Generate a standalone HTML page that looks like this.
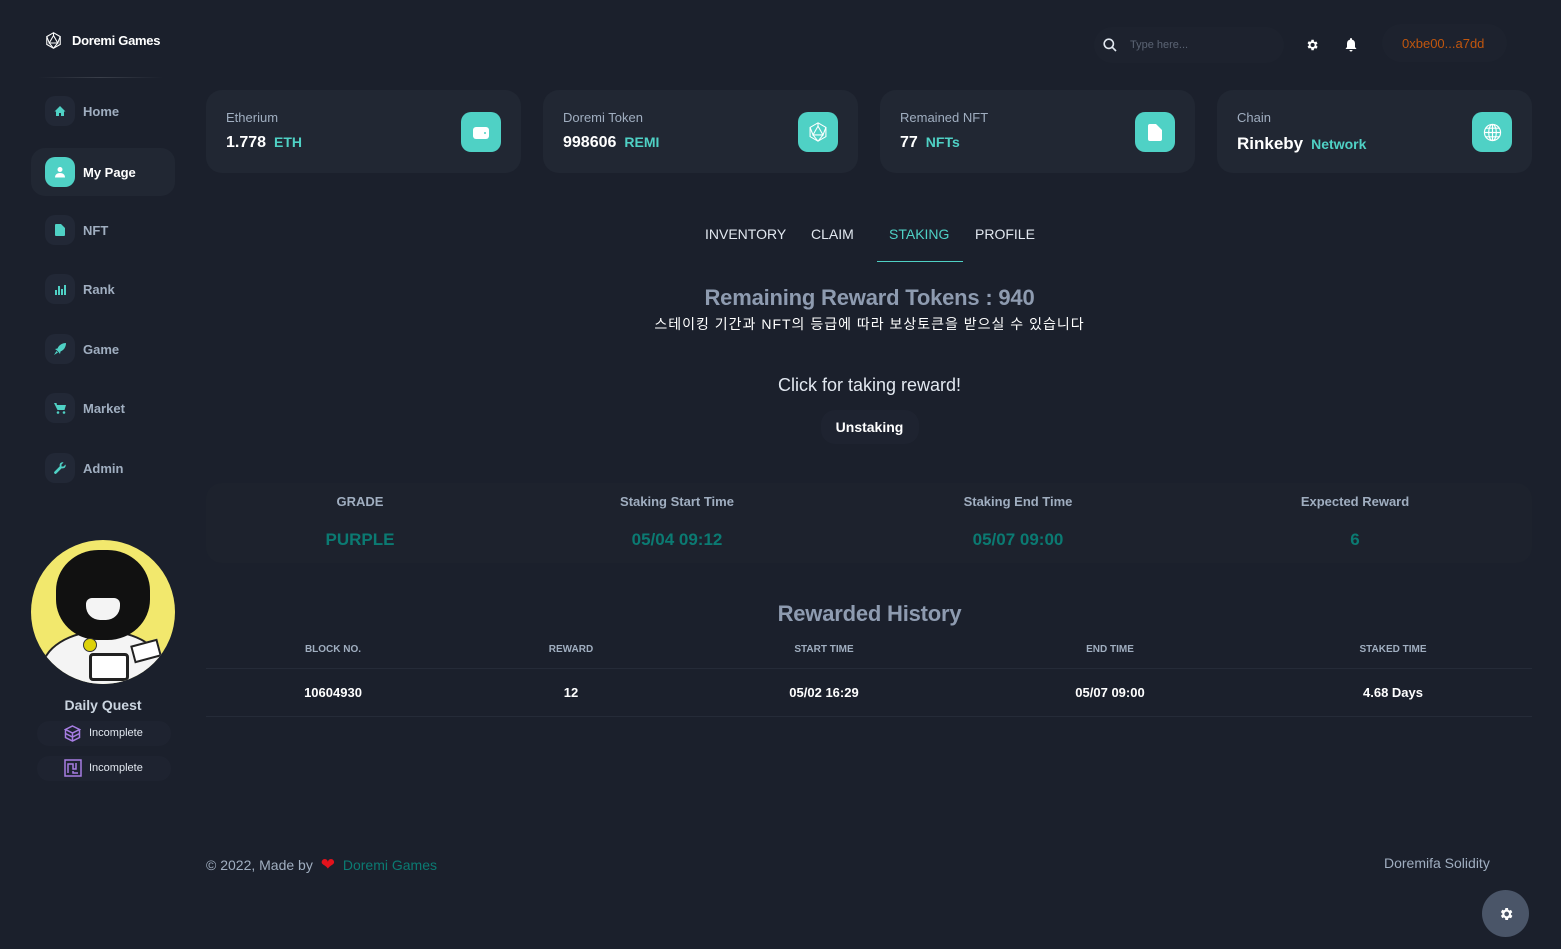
<!DOCTYPE html>
<html><head><meta charset="utf-8"><style>
*{margin:0;padding:0;box-sizing:border-box}
body{width:1561px;height:949px;background:#1b202c;font-family:"Liberation Sans","Noto Sans CJK KR",sans-serif;position:relative;overflow:hidden;color:#fff}
.a{position:absolute}
.nav{position:absolute;left:45px;width:130px;height:30px;display:flex;align-items:center}
.ni{width:30px;height:30px;border-radius:10px;background:#222836;display:flex;align-items:center;justify-content:center;margin-right:8px}
.nt{font-size:13px;font-weight:bold;color:#a0aec0}
.card{position:absolute;top:90px;width:315px;height:83px;background:#212733;border-radius:16px}
.card .l{position:absolute;left:20px;top:20px;font-size:13px;color:#a0aec0}
.card .v{position:absolute;left:20px;top:44px;font-size:16px;font-weight:bold;color:#fff}
.card .v span{color:#4fd1c5;font-size:14px;margin-left:8px}
.card .ic{position:absolute;right:20px;top:22px;width:40px;height:40px;border-radius:10px;background:#4fd1c5;display:flex;align-items:center;justify-content:center}
.tab{position:absolute;top:226px;font-size:14px;color:#e2e8f0}
.sh{position:absolute;top:494px;font-size:13px;font-weight:bold;color:#a0aec0;text-align:center;width:300px}
.sv{position:absolute;top:530px;font-size:17px;font-weight:bold;color:#0b7a72;text-align:center;width:300px}
.th{position:absolute;top:644px;font-size:10px;font-weight:bold;color:#a0aec0;text-align:center;width:200px}
.td{position:absolute;top:685px;font-size:13px;font-weight:bold;color:#fff;text-align:center;width:200px}
</style></head><body>
<svg class="a" style="left:45px;top:32px" width="17" height="17" viewBox="0 0 24 24" fill="none" stroke="#fff" stroke-width="1.5"><polygon points="12,1 21.5,6.5 21.5,17.5 12,23 2.5,17.5 2.5,6.5"/><polygon points="12,5 18,15.5 6,15.5"/><path d="M12 1v4M21.5 6.5L18 15.5M2.5 6.5L6 15.5M12 23l-6-7.5M12 23l6-7.5"/></svg>
<div class="a" style="left:72px;top:33px;font-size:13px;font-weight:bold;color:#fff;letter-spacing:-0.3px">Doremi Games</div>
<div class="a" style="left:38px;top:77px;width:125px;height:1px;background:linear-gradient(90deg,transparent,#3a3f4a,transparent)"></div>

<div class="nav" style="top:96px"><div class="ni"><svg width="12" height="12" viewBox="0 0 12 12"><path d="M6 1L0.5 6.5H2V11H5V8H7V11H10V6.5H11.5Z" fill="#4fd1c5"/></svg></div><span class="nt">Home</span></div>
<div class="a" style="left:31px;top:148px;width:144px;height:48px;border-radius:14px;background:#212733"></div>
<div class="nav" style="top:157px"><div class="ni" style="background:#4fd1c5"><svg width="12" height="12" viewBox="0 0 12 12" fill="#fff"><circle cx="6" cy="3.5" r="2.5"/><path d="M1 11.5c0-3 2.2-4.5 5-4.5s5 1.5 5 4.5z"/></svg></div><span class="nt" style="color:#fff">My Page</span></div>
<div class="nav" style="top:215px"><div class="ni"><svg width="10" height="12" viewBox="0 0 10 12"><path d="M0 1a1 1 0 011-1h5l4 4v7a1 1 0 01-1 1H1a1 1 0 01-1-1z" fill="#4fd1c5"/></svg></div><span class="nt">NFT</span></div>
<div class="nav" style="top:274px"><div class="ni"><svg width="11" height="11" viewBox="0 0 11 11" fill="#4fd1c5"><rect x="0" y="6" width="2" height="5"/><rect x="3" y="2" width="2" height="9"/><rect x="6" y="5" width="2" height="6"/><rect x="9" y="1" width="2" height="10"/></svg></div><span class="nt">Rank</span></div>
<div class="nav" style="top:334px"><div class="ni"><svg width="12" height="12" viewBox="0 0 12 12" fill="#4fd1c5"><path d="M12 0C8 0 5 2 3.5 5.5L1 6l2 1.5L4.5 9 6 11l.5-2.5C10 7 12 4 12 0zM0 12l2.5-4 1.5 1.5z"/></svg></div><span class="nt">Game</span></div>
<div class="nav" style="top:393px"><div class="ni"><svg width="12" height="11" viewBox="0 0 12 11" fill="#4fd1c5"><path d="M0 0h2.5l.5 2H12l-1.5 5H3.5z"/><circle cx="4" cy="9.5" r="1.3"/><circle cx="10" cy="9.5" r="1.3"/></svg></div><span class="nt">Market</span></div>
<div class="nav" style="top:453px"><div class="ni"><svg width="12" height="12" viewBox="0 0 12 12" fill="#4fd1c5"><path d="M11.5 2.5L9.5 4.5 7.5 4.5 7.5 2.5 9.5.5C7.5-.3 5 1.5 5.8 4.3L.5 9.6a1.3 1.3 0 001.9 1.9L7.7 6.2c2.8.8 4.6-1.7 3.8-3.7z"/></svg></div><span class="nt">Admin</span></div>

<div class="a" style="left:31px;top:540px;width:144px;height:144px;border-radius:50%;background:#f2e86d;overflow:hidden">
 <div class="a" style="left:10px;top:90px;width:124px;height:80px;border-radius:50% 50% 0 0;background:#f4f4f4;border:2px solid #222"></div>
 <div class="a" style="left:25px;top:10px;width:94px;height:90px;border-radius:45%;background:#111"></div>
 <div class="a" style="left:55px;top:58px;width:34px;height:22px;border-radius:6px 6px 14px 14px;background:#f4f4f4"></div>
 <div class="a" style="left:52px;top:98px;width:14px;height:14px;border-radius:50%;background:#ddd20a;border:1px solid #333"></div>
 <div class="a" style="left:58px;top:113px;width:40px;height:28px;border:3px solid #222;border-radius:4px;background:#fff"></div>
 <div class="a" style="left:101px;top:102px;width:28px;height:18px;border:2px solid #222;background:#fff;transform:rotate(-15deg)"></div>
</div>
<div class="a" style="left:0;width:206px;top:697px;text-align:center;font-size:14px;font-weight:bold;color:#cbd5e0">Daily Quest</div>
<div class="a" style="left:37px;top:721px;width:134px;height:25px;border-radius:12px;background:#1e2330"></div>
<div class="a" style="left:37px;top:756px;width:134px;height:25px;border-radius:12px;background:#1e2330"></div>
<svg class="a" style="left:64px;top:725px" width="17" height="17" viewBox="0 0 17 17" fill="none" stroke="#a77de3" stroke-width="1.5"><path d="M8.5 1L15.5 4.5 8.5 8 1.5 4.5zM1.5 4.5v8L8.5 16l7-3.5v-8M8.5 8v8M1.5 8.5l7 3.5 7-3.5"/></svg>
<div class="a" style="left:89px;top:727px;font-size:11px;color:#e2e8f0">Incomplete</div>
<svg class="a" style="left:64px;top:759px" width="18" height="18" viewBox="0 0 18 18" fill="none" stroke="#a77de3" stroke-width="1.5"><rect x="1" y="1" width="16" height="16"/><path d="M4 14V5h5v5h3V4M14 14H9v-2"/></svg>
<div class="a" style="left:89px;top:762px;font-size:11px;color:#e2e8f0">Incomplete</div>

<div class="a" style="left:1094px;top:27px;width:190px;height:36px;border-radius:18px;background:#1d222e"></div>
<svg class="a" style="left:1103px;top:38px" width="14" height="14" viewBox="0 0 14 14" fill="none" stroke="#e2e8f0" stroke-width="1.6"><circle cx="5.8" cy="5.8" r="4.6"/><path d="M9.2 9.2L13 13"/></svg>
<div class="a" style="left:1130px;top:39px;font-size:11px;color:#5b6474">Type here...</div>
<svg class="a" style="left:1305px;top:38px" width="14" height="14" viewBox="0 0 24 24" fill="#fff"><path d="M19.4 13a7.5 7.5 0 000-2l2.1-1.6-2-3.5-2.5 1a7.5 7.5 0 00-1.7-1L15 3h-4l-.4 2.6a7.5 7.5 0 00-1.7 1l-2.5-1-2 3.5L6.5 11a7.5 7.5 0 000 2l-2.1 1.6 2 3.5 2.5-1a7.5 7.5 0 001.7 1L11 21h4l.4-2.6a7.5 7.5 0 001.7-1l2.5 1 2-3.5zM13 15.5a3.5 3.5 0 110-7 3.5 3.5 0 010 7z"/></svg>
<svg class="a" style="left:1345px;top:38px" width="12" height="14" viewBox="0 0 12 14" fill="#fff"><path d="M6 0a1 1 0 011 1v.6A4 4 0 0110 5.5V9l1.5 2h-11L2 9V5.5a4 4 0 013-3.9V1a1 1 0 011-1zM4.5 12h3a1.5 1.5 0 01-3 0z"/></svg>
<div class="a" style="left:1382px;top:24px;width:125px;height:38px;border-radius:19px;background:#1d222e"></div>
<div class="a" style="left:1402px;top:36px;font-size:13px;color:#c0560e">0xbe00...a7dd</div>

<div class="card" style="left:206px"><div class="l">Etherium</div><div class="v">1.778<span>ETH</span></div><div class="ic"><svg width="18" height="15" viewBox="0 0 18 15"><rect x="1" y="2" width="16" height="12" rx="3" fill="#fff"/><circle cx="13" cy="8" r="1" fill="#4fd1c5"/></svg></div></div>
<div class="card" style="left:543px"><div class="l">Doremi Token</div><div class="v">998606<span>REMI</span></div><div class="ic"><svg width="20" height="20" viewBox="0 0 24 24" fill="none" stroke="#fff" stroke-width="1.3"><polygon points="12,1 21.5,6.5 21.5,17.5 12,23 2.5,17.5 2.5,6.5"/><polygon points="12,5 18,15.5 6,15.5"/><path d="M12 1v4M21.5 6.5L18 15.5M2.5 6.5L6 15.5M12 23l-6-7.5M12 23l6-7.5"/></svg></div></div>
<div class="card" style="left:880px"><div class="l">Remained NFT</div><div class="v">77<span>NFTs</span></div><div class="ic"><svg width="14" height="17" viewBox="0 0 14 17"><path d="M0 2a2 2 0 012-2h6l6 6v9a2 2 0 01-2 2H2a2 2 0 01-2-2z" fill="#fff"/></svg></div></div>
<div class="card" style="left:1217px"><div class="l">Chain</div><div class="v" style="font-size:17px">Rinkeby<span>Network</span></div><div class="ic"><svg width="19" height="19" viewBox="0 0 20 20" fill="none" stroke="#fff" stroke-width="1.2"><circle cx="10" cy="10" r="8.5"/><ellipse cx="10" cy="10" rx="4" ry="8.5"/><path d="M1.5 10h17M3 5.5h14M3 14.5h14M10 1.5v17"/></svg></div></div>

<div class="tab" style="left:705px">INVENTORY</div>
<div class="tab" style="left:811px">CLAIM</div>
<div class="tab" style="left:889px;color:#4fd1c5">STAKING</div>
<div class="tab" style="left:975px">PROFILE</div>
<div class="a" style="left:877px;top:261px;width:86px;height:1px;background:#4fd1c5"></div>

<div class="a" style="left:0;width:1739px;top:285px;text-align:center;font-size:22px;font-weight:bold;color:#8e9bb0;letter-spacing:-0.2px">Remaining Reward Tokens : 940</div>
<div class="a" style="left:0;width:1739px;top:314px;text-align:center;font-size:14px;color:#fff;letter-spacing:1px">스테이킹 기간과 NFT의 등급에 따라 보상토큰을 받으실 수 있습니다</div>
<div class="a" style="left:0;width:1739px;top:375px;text-align:center;font-size:18px;color:#e2e8f0">Click for taking reward!</div>
<div class="a" style="left:821px;top:410px;width:98px;height:34px;border-radius:14px;background:#1e2330"></div>
<div class="a" style="left:0;width:1739px;top:419px;text-align:center;font-size:14px;font-weight:bold;color:#fff">Unstaking</div>

<div class="a" style="left:206px;top:483px;width:1326px;height:80px;border-radius:16px;background:#1d222d"></div>
<div class="sh" style="left:210px">GRADE</div><div class="sv" style="left:210px">PURPLE</div>
<div class="sh" style="left:527px">Staking Start Time</div><div class="sv" style="left:527px">05/04 09:12</div>
<div class="sh" style="left:868px">Staking End Time</div><div class="sv" style="left:868px">05/07 09:00</div>
<div class="sh" style="left:1205px">Expected Reward</div><div class="sv" style="left:1205px">6</div>

<div class="a" style="left:0;width:1739px;top:601px;text-align:center;font-size:22px;font-weight:bold;color:#8e9bb0;letter-spacing:-0.2px">Rewarded History</div>
<div class="th" style="left:233px">BLOCK NO.</div><div class="td" style="left:233px">10604930</div>
<div class="th" style="left:471px">REWARD</div><div class="td" style="left:471px">12</div>
<div class="th" style="left:724px">START TIME</div><div class="td" style="left:724px">05/02 16:29</div>
<div class="th" style="left:1010px">END TIME</div><div class="td" style="left:1010px">05/07 09:00</div>
<div class="th" style="left:1293px">STAKED TIME</div><div class="td" style="left:1293px">4.68 Days</div>
<div class="a" style="left:206px;top:668px;width:1326px;height:1px;background:#252b38"></div>
<div class="a" style="left:206px;top:716px;width:1326px;height:1px;background:#252b38"></div>

<div class="a" style="left:206px;top:855px;font-size:14px;color:#a0aec0">© 2022, Made by <span style="color:#e3121c;font-size:17px;margin:0 4px">❤</span> <span style="color:#0b7a72">Doremi Games</span></div>
<div class="a" style="left:1384px;top:855px;font-size:14px;color:#a0aec0">Doremifa Solidity</div>
<div class="a" style="left:1482px;top:890px;width:47px;height:47px;border-radius:50%;background:#4a5568;display:flex;align-items:center;justify-content:center"><svg width="16" height="16" viewBox="0 0 24 24" fill="#fff"><path d="M19.4 13a7.5 7.5 0 000-2l2.1-1.6-2-3.5-2.5 1a7.5 7.5 0 00-1.7-1L15 3h-4l-.4 2.6a7.5 7.5 0 00-1.7 1l-2.5-1-2 3.5L6.5 11a7.5 7.5 0 000 2l-2.1 1.6 2 3.5 2.5-1a7.5 7.5 0 001.7 1L11 21h4l.4-2.6a7.5 7.5 0 001.7-1l2.5 1 2-3.5zM13 15.5a3.5 3.5 0 110-7 3.5 3.5 0 010 7z"/></svg></div>
</body></html>
